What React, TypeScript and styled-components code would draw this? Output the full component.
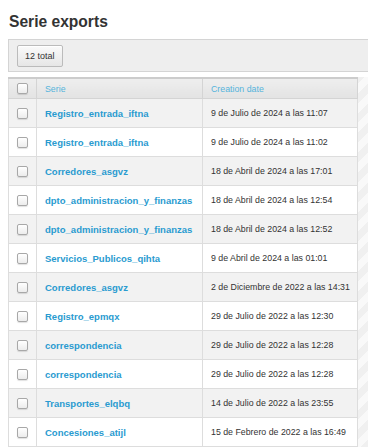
import { styled, createGlobalStyle } from "styled-components"

const GlobalStyle = createGlobalStyle`
body {
  margin: 8px;
  background: #fff;
  font-family: "Liberation Sans", Arial, sans-serif;
  color: #333;
  overflow: hidden;
}
`

interface IExport {
  name: string
  date: string
}

const exportsData: IExport[] = [
  { name: "Registro_entrada_iftna", date: "9 de Julio de 2024 a las 11:07" },
  { name: "Registro_entrada_iftna", date: "9 de Julio de 2024 a las 11:02" },
  { name: "Corredores_asgvz", date: "18 de Abril de 2024 a las 17:01" },
  { name: "dpto_administracion_y_finanzas", date: "18 de Abril de 2024 a las 12:54" },
  { name: "dpto_administracion_y_finanzas", date: "18 de Abril de 2024 a las 12:52" },
  { name: "Servicios_Publicos_qihta", date: "9 de Abril de 2024 a las 01:01" },
  { name: "Corredores_asgvz", date: "2 de Diciembre de 2022 a las 14:31" },
  { name: "Registro_epmqx", date: "29 de Julio de 2022 a las 12:30" },
  { name: "correspondencia", date: "29 de Julio de 2022 a las 12:28" },
  { name: "correspondencia", date: "29 de Julio de 2022 a las 12:28" },
  { name: "Transportes_elqbq", date: "14 de Julio de 2022 a las 23:55" },
  { name: "Concesiones_atijl", date: "15 de Febrero de 2022 a las 16:49" },
]

export default function App() {
  return <>
    <GlobalStyle />
    <Title>Serie exports</Title>
    <Toolbar>
      <TotalBtn>{exportsData.length} total</TotalBtn>
    </Toolbar>
    <TableArea>
      <Table>
        <colgroup>
          <col style={{ width: 28 }} />
          <col style={{ width: 166 }} />
          <col style={{ width: 155 }} />
        </colgroup>
        <thead>
          <tr>
            <CheckHead><Check type="checkbox" /></CheckHead>
            <HeadCell>Serie</HeadCell>
            <HeadCell>Creation date</HeadCell>
          </tr>
        </thead>
        <tbody>
          {exportsData.map((item, i) => (
            <Row key={i} $odd={i % 2 === 0}>
              <CheckCell><Check type="checkbox" /></CheckCell>
              <Cell><NameLink href="#">{item.name}</NameLink></Cell>
              <Cell>{item.date}</Cell>
            </Row>
          ))}
        </tbody>
      </Table>
    </TableArea>
  </>
}

const Title = styled.h1`
  font-size: 15.6px;
  font-weight: bold;
  color: #333;
  margin: 3px 0 0 1px;
  line-height: 22px;
  height: 28px;
`

const Toolbar = styled.div`
  display: flex;
  align-items: center;
  height: 31px;
  margin-right: -8px;
  padding-left: 8px;
  background: #eee;
  border: 1px solid #d4d4d4;
  border-right: none;
`

const TotalBtn = styled.span`
  display: inline-flex;
  align-items: center;
  justify-content: center;
  height: 20px;
  padding: 0 7px;
  font-size: 9px;
  color: #333;
  background: linear-gradient(#fafafa, #e6e6e6);
  border: 1px solid #bbb;
  border-radius: 2px;
  box-shadow: inset 0 1px 0 #fff;
`

const TableArea = styled.div`
  margin-top: 5px;
  margin-right: -8px;
  background: repeating-linear-gradient(135deg, #f9f9f9 0 7px, #f0f0f0 7px 14px);
`

const Table = styled.table`
  width: 349px;
  table-layout: fixed;
  border-collapse: collapse;
  background: #fff;
  font-size: 8.8px;
  border-top: 2px solid #ccc;
  border-left: 1px solid #ddd;
  border-bottom: 1px solid #ddd;
`

const HeadCell = styled.th`
  height: 19px;
  padding: 0 8px;
  text-align: left;
  font-weight: normal;
  color: #55b4dc;
  background: linear-gradient(#eeeeee, #e3e3e3);
  border-right: 1px solid #d4d4d4;
  border-bottom: 1px solid #d4d4d4;
`

const CheckHead = styled(HeadCell)`
  padding: 0;
  text-align: center;
`

const Row = styled.tr<{ $odd: boolean }>`
  background: ${p => (p.$odd ? "#f2f2f2" : "#fff")};
`

const Cell = styled.td`
  height: 28px;
  padding: 0 8px;
  color: #333;
  white-space: nowrap;
  overflow: hidden;
  border-right: 1px solid #ddd;
  border-bottom: 1px solid #ddd;
`

const CheckCell = styled(Cell)`
  padding: 0;
  text-align: center;
`

const Check = styled.input`
  appearance: none;
  display: block;
  margin: 0 auto;
  width: 11px;
  height: 11px;
  border: 1px solid #a8a8a8;
  border-radius: 2px;
  background: linear-gradient(#fff, #ececec);
  box-shadow: 0 1px 1px rgba(0, 0, 0, 0.12);
`

const NameLink = styled.a`
  color: #2a9bd0;
  font-size: 9.5px;
  font-weight: bold;
  text-decoration: none;
`
